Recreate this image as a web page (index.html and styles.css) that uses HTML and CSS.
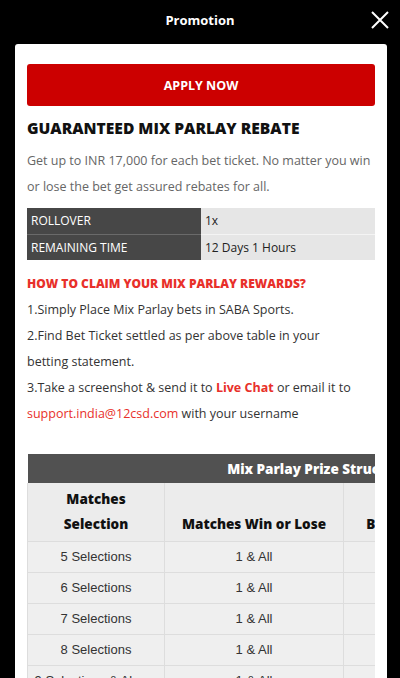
FILE: index.html
```html
<!DOCTYPE html>
<html>
<head>
<meta charset="utf-8">
<link rel="stylesheet" href="styles.css">
</head>
<body>
<header class="topbar">
  <h1 class="title">Promotion</h1>
  <button class="close" aria-label="Close">
    <svg width="18" height="18" viewBox="0 0 18 18"><path d="M1 1L17 17M17 1L1 17" stroke="#fff" stroke-width="2" fill="none"/></svg>
  </button>
</header>
<main class="card">
  <a class="apply">APPLY NOW</a>
  <h2 class="headline">GUARANTEED MIX PARLAY REBATE</h2>
  <p class="intro">Get up to INR 17,000 for each bet ticket. No matter you win or lose the bet get assured rebates for all.</p>
  <table class="info">
    <tr><th>ROLLOVER</th><td>1x</td></tr>
    <tr><th>REMAINING TIME</th><td>12 Days 1 Hours</td></tr>
  </table>
  <h3 class="claim">HOW TO CLAIM YOUR MIX PARLAY REWARDS?</h3>
  <div class="steps">
    <p>1.Simply Place Mix Parlay bets in SABA Sports.</p>
    <p>2.Find Bet Ticket settled as per above table in your<br>betting statement.</p>
    <p>3.Take a screenshot &amp; send it to <b class="red">Live Chat</b> or email it to <span class="red">support.india@12csd.com</span> with your username</p>
  </div>
  <div class="scroller">
    <table class="prize">
      <colgroup><col class="c1"><col class="c2"><col class="c3"><col class="c4"></colgroup>
      <thead>
        <tr><th class="cap" colspan="4">Mix Parlay Prize Structure</th></tr>
        <tr class="heads"><th>Matches<br>Selection</th><th>Matches Win or Lose</th><th>Bonus Amount</th><th>Max Bonus</th></tr>
      </thead>
      <tbody>
        <tr><td>5 Selections</td><td>1 &amp; All</td><td>5%</td><td>INR 17,000</td></tr>
        <tr><td>6 Selections</td><td>1 &amp; All</td><td>8%</td><td>INR 17,000</td></tr>
        <tr><td>7 Selections</td><td>1 &amp; All</td><td>10%</td><td>INR 17,000</td></tr>
        <tr><td>8 Selections</td><td>1 &amp; All</td><td>12%</td><td>INR 17,000</td></tr>
        <tr><td>9 Selections &amp; Above</td><td>1 &amp; All</td><td>15%</td><td>INR 17,000</td></tr>
      </tbody>
    </table>
  </div>
</main>
</body>
</html>
```
FILE: styles.css
```css
* { box-sizing: border-box; }
html, body { margin: 0; padding: 0; }
body {
  background: #000;
  width: 400px;
  height: 678px;
  overflow: hidden;
  font-family: "Open Sans", "Noto Sans", sans-serif;
}
.topbar {
  height: 44px;
  display: flex;
  align-items: flex-start;
  justify-content: center;
  position: relative;
}
.title {
  margin: 0;
  color: #fff;
  font-size: 13px;
  font-weight: 700;
  line-height: 40px;
}
.close {
  position: absolute;
  right: 11px;
  top: 11px;
  background: none;
  border: 0;
  padding: 0;
  width: 18px;
  height: 18px;
  display: block;
}
.close svg { display: block; }
.card {
  background: #fff;
  margin: 0 13px 0 15px;
  border-radius: 3px 3px 0 0;
  padding: 20px 12px 0 12px;
  height: 640px;
  overflow: hidden;
}
.apply {
  display: flex;
  align-items: center;
  justify-content: center;
  height: 42px;
  background: #cc0000;
  border-radius: 3px;
  color: #fff;
  font-weight: 700;
  font-size: 12.5px;
}
.headline {
  margin: 10px 0 0;
  font-size: 15.6px;
  line-height: 24px;
  font-weight: 800;
  color: #111;
}
.intro {
  margin: 8px 0 0;
  font-size: 12.5px;
  line-height: 26px;
  color: #666;
}
.info {
  margin-top: 8px;
  width: 100%;
  border-collapse: collapse;
  font-size: 12px;
}
.info th, .info td {
  height: 26px;
  padding: 0 4px;
  text-align: left;
  font-weight: 400;
}
.info th {
  width: 174px;
  background: #474747;
  color: #fff;
  border-bottom: 1px solid #6a6a6a;
}
.info td {
  background: #e6e6e6;
  color: #222;
  border-bottom: 1px solid #f4f4f4;
}
.info tr:last-child th, .info tr:last-child td { border-bottom: 0; }
.claim {
  margin: 11px 0 0;
  font-size: 12px;
  line-height: 26px;
  font-weight: 800;
  color: #e8302a;
}
.steps p {
  margin: 0;
  font-size: 12.5px;
  line-height: 26px;
  color: #333;
}
.red { color: #e8302a; }
b.red { font-weight: 700; }
.scroller {
  margin-top: 27px;
  overflow: hidden;
  width: 348px;
}
.prize {
  border-collapse: collapse;
  width: 581px;
  table-layout: fixed;
}
.c1 { width: 137px; }
.c2 { width: 179px; }
.c3 { width: 148px; }
.c4 { width: 117px; }
.prize .cap {
  background: #515151;
  color: #fff;
  height: 29px;
  font-size: 13.5px;
  font-weight: 800;
  text-align: center;
  padding: 0;
}
.heads th {
  background: #ececec;
  color: #111;
  font-size: 13.5px;
  font-weight: 800;
  line-height: 25px;
  height: 58px;
  vertical-align: bottom;
  padding: 0 0 4px;
  border: 1px solid #dddddd;
  border-top: 0;
  white-space: nowrap;
}
.prize td {
  background: #efefef;
  height: 31px;
  text-align: center;
  font-family: "Liberation Sans", Arial, sans-serif;
  font-size: 13px;
  color: #333;
  border: 1px solid #dddddd;
  padding: 0;
  white-space: nowrap;
}
```
